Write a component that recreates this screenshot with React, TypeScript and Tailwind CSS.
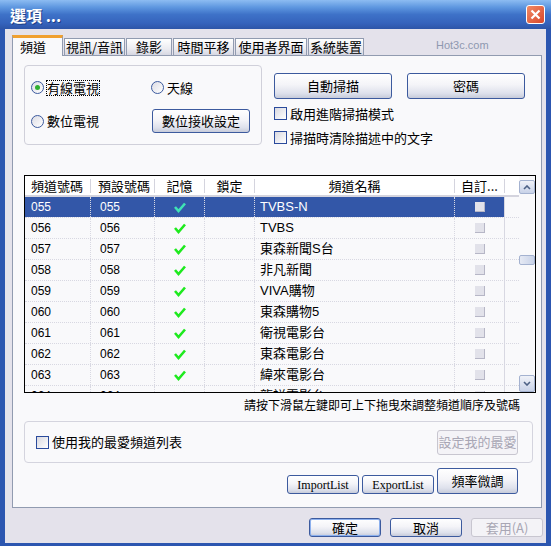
import React from "react";

const cjk = "font-['Noto_Sans_CJK_TC',sans-serif]";
const num = "font-['Liberation_Sans','Noto_Sans_CJK_TC',sans-serif]";

const rows = [
  ["055", "055", "TVBS-N"],
  ["056", "056", "TVBS"],
  ["057", "057", "東森新聞S台"],
  ["058", "058", "非凡新聞"],
  ["059", "059", "VIVA購物"],
  ["060", "060", "東森購物5"],
  ["061", "061", "衛視電影台"],
  ["062", "062", "東森電影台"],
  ["063", "063", "緯來電影台"],
  ["064", "064", "龍祥電影台"],
];

const tabs = ["頻道", "視訊/音訊", "錄影", "時間平移", "使用者界面", "系統裝置"];
const tabW = ["w-[51px]", "w-[61px]", "w-[46px]", "w-[61px]", "w-[72px]", "w-[56px]"];

function XpButton({ children, className = "", disabled = false }: { children: React.ReactNode; className?: string; disabled?: boolean }) {
  return (
    <div
      className={
        "flex items-center justify-center rounded-[3px] border text-[12px] leading-[14px] " +
        (disabled
          ? "border-[#C8C6D0] bg-[#F4F3F7] text-[#A8A6B4] "
          : "border-[#3C5A9E] bg-[linear-gradient(#FFFFFF_0%,#F4F4F8_45%,#DEE1EC_80%,#C6CBDA_100%)] text-black ") +
        className
      }
    >
      {children}
    </div>
  );
}

function Radio({ checked = false }: { checked?: boolean }) {
  return (
    <div className="flex h-[13px] w-[13px] shrink-0 items-center justify-center rounded-full border border-[#3C5A9E] bg-[linear-gradient(135deg,#DCDCE4,#FFFFFF)]">
      {checked && <div className="h-[5px] w-[5px] rounded-full bg-[#2FAF2F]" />}
    </div>
  );
}

function Check() {
  return <div className="h-[13px] w-[13px] shrink-0 border border-[#2A4A9C] bg-[linear-gradient(135deg,#D8D8E0,#FFFFFF)]" />;
}

function Tick({ color }: { color: string }) {
  return (
    <svg width="12" height="11" viewBox="0 0 12 11">
      <path d="M1 5 L4.5 9 L11 1.5" stroke={color} strokeWidth="2.6" fill="none" />
    </svg>
  );
}

export default function App() {
  return (
    <div className={"flex h-[546px] w-[551px] flex-col bg-[#2C56B0] leading-[14px] " + cjk}>
      {/* title bar */}
      <div className="relative flex h-[29px] shrink-0 items-center bg-[linear-gradient(#8DBCF2_0%,#5E97E0_25%,#3E72C8_50%,#3563BC_80%,#2D55A8_100%)] pl-[10px]">
        <span className="text-[16px] font-bold leading-[20px] text-white [text-shadow:1px_1px_0_#1D3F86]">選項 ...</span>
        <div className="absolute right-[6px] top-[5px] flex h-[19px] w-[19px] items-center justify-center rounded-[3px] border border-white bg-[linear-gradient(135deg,#F08A66,#D9472A)]">
          <svg width="11" height="11" viewBox="0 0 11 11">
            <path d="M1.5 1.5 L9.5 9.5 M9.5 1.5 L1.5 9.5" stroke="white" strokeWidth="2.2" />
          </svg>
        </div>
      </div>

      {/* body */}
      <div className="mx-[5px] mb-[3px] flex flex-1 flex-col bg-[#E4E2EB]">
        {/* tabs */}
        <div className="relative ml-[7px] mt-[6px] flex h-[20px] shrink-0 items-end">
          {tabs.map((t, i) =>
            i === 0 ? (
              <div key={t} className={"relative z-10 -mb-[1px] flex h-[21px] items-center border-x border-t-[3px] border-[#919BB0] border-t-[#F0A030] bg-[#F9F9FB] pl-[7px] text-[13px] " + tabW[i]}>
                {t}
              </div>
            ) : (
              <div key={t} className={"ml-[1px] flex h-[17px] items-center justify-center border-x border-t border-[#919BB0] bg-[linear-gradient(#FFFFFF,#ECECF1_60%,#D6D7E2)] text-[13px] " + tabW[i]}>
                {t}
              </div>
            )
          )}
          <span className={"mb-[3px] ml-[72px] text-[11px] text-[#8E98B0] " + num}>Hot3c.com</span>
        </div>

        {/* panel */}
        <div className="ml-[7px] flex h-[453px] w-[530px] shrink-0 flex-col border border-[#919BB0] bg-[#F9F9FB]">
          <div className="flex h-[89px] shrink-0 items-start pl-[11px] pt-[9px]">
            <div className="h-[80px] w-[238px] rounded-[4px] border border-[#D0D0DA] pl-[6px] pt-[15px] text-[13px]">
              <div className="flex h-[13px] items-center">
                <div className="flex w-[120px] items-center gap-[3px]">
                  <Radio checked />
                  <span className="outline-dotted outline-1 outline-black">有線電視</span>
                </div>
                <div className="flex items-center gap-[3px]">
                  <Radio />
                  <span>天線</span>
                </div>
              </div>
              <div className="mt-[15px] flex h-[24px] items-center">
                <div className="flex w-[121px] items-center gap-[3px]">
                  <Radio />
                  <span>數位電視</span>
                </div>
                <XpButton className="h-[24px] w-[98px] text-[13px]">數位接收設定</XpButton>
              </div>
            </div>
            <div className="ml-[12px] pt-[8px] text-[13px]">
              <div className="flex gap-[15px]">
                <XpButton className="h-[26px] w-[118px] text-[13px]">自動掃描</XpButton>
                <XpButton className="h-[26px] w-[118px] text-[13px]">密碼</XpButton>
              </div>
              <div className="mt-[8px] flex h-[13px] items-center gap-[3px]">
                <Check />
                <span>啟用進階掃描模式</span>
              </div>
              <div className="mt-[11px] flex h-[13px] items-center gap-[3px]">
                <Check />
                <span>掃描時清除描述中的文字</span>
              </div>
            </div>
          </div>

          {/* table */}
          <div className="ml-[11px] mt-[30px] flex h-[218px] w-[512px] shrink-0 border border-black bg-[#F9F9FB]">
            <div className="flex w-[494px] flex-col overflow-hidden">
              <div className="flex h-[21px] shrink-0 items-center border-b-2 border-[#D4D4DE] bg-white text-[13px]">
                <div className="w-[66px] border-r border-[#D4D4DE] pl-[6px]">頻道號碼</div>
                <div className="w-[64px] border-r border-[#D4D4DE] pl-[7px]">預設號碼</div>
                <div className="w-[50px] border-r border-[#D4D4DE] text-center">記憶</div>
                <div className="w-[50px] border-r border-[#D4D4DE] text-center">鎖定</div>
                <div className="w-[200px] border-r border-[#D4D4DE] text-center">頻道名稱</div>
                <div className="w-[50px] border-r border-[#D4D4DE] text-center">自訂...</div>
              </div>
              {rows.map((r, i) => {
                const sel = i === 0;
                const bg = sel ? " bg-[#3357A8]" : "";
                return (
                  <div
                    key={r[0]}
                    className={"flex h-[21px] shrink-0 items-stretch border-b border-dotted border-[#D8D8E2] text-[12px] " + (sel ? "text-white" : "text-black")}
                  >
                    <div className={"flex w-[66px] items-center border-r border-dotted border-[#D8D8E2] pl-[6px] " + num + bg}>{r[0]}</div>
                    <div className={"flex w-[64px] items-center border-r border-dotted border-[#D8D8E2] pl-[9px] " + num + bg}>{r[1]}</div>
                    <div className={"flex w-[50px] items-center justify-center border-r border-dotted border-[#D8D8E2]" + bg}>
                      <Tick color={sel ? "#3FE4B4" : "#1EEA1E"} />
                    </div>
                    <div className={"w-[50px] border-r border-dotted border-[#D8D8E2]" + bg} />
                    <div className={"flex w-[200px] items-center border-r border-dotted border-[#D8D8E2] pl-[5px] text-[13px] " + num + bg}>{r[2]}</div>
                    <div className={"flex w-[50px] items-center justify-center border-r border-[#D8D8E2]" + bg}>
                      <div className="h-[10px] w-[10px] border-b border-r border-[#B6B6C6] bg-[#E2E2EA]" />
                    </div>
                  </div>
                );
              })}
            </div>
            {/* scrollbar */}
            <div className="flex w-[16px] flex-col pt-[4px]">
              <div className="flex h-[14px] items-center justify-center rounded-[2px] border border-[#A4B2D0] bg-[linear-gradient(#F0F2F8,#C8D2E8)]">
                <svg width="8" height="5" viewBox="0 0 8 5"><path d="M1 4 L4 1 L7 4" stroke="#4D6185" strokeWidth="1.6" fill="none" /></svg>
              </div>
              <div className="mt-[61px] h-[10px] rounded-[2px] border border-[#A4B2D0] bg-[linear-gradient(90deg,#E6EAF4,#C8D2E8)]" />
              <div className="flex-1" />
              <div className="flex h-[17px] items-center justify-center rounded-[2px] border border-[#A4B2D0] bg-[linear-gradient(#F0F2F8,#C8D2E8)]">
                <svg width="8" height="5" viewBox="0 0 8 5"><path d="M1 1 L4 4 L7 1" stroke="#4D6185" strokeWidth="1.6" fill="none" /></svg>
              </div>
            </div>
          </div>

          <div className="mr-[21px] mt-[4px] h-[16px] shrink-0 text-right text-[12px] leading-[16px]">請按下滑鼠左鍵即可上下拖曳來調整頻道順序及號碼</div>

          {/* favourites */}
          <div className="ml-[11px] mt-[8px] flex h-[42px] w-[509px] shrink-0 items-center justify-between rounded-[4px] border border-[#D4D4DE] pl-[11px] pr-[14px] text-[13px]">
            <div className="flex items-center gap-[3px]">
              <Check />
              <span>使用我的最愛頻道列表</span>
            </div>
            <XpButton disabled className="h-[25px] w-[81px] text-[13px]">設定我的最愛</XpButton>
          </div>

          <div className="mr-[23px] mt-[5px] flex items-end justify-end gap-[3px]">
            <XpButton className="h-[19px] w-[72px] font-['Liberation_Serif',serif] text-[12px]">ImportList</XpButton>
            <XpButton className="h-[19px] w-[72px] font-['Liberation_Serif',serif] text-[12px]">ExportList</XpButton>
            <XpButton className="h-[26px] w-[81px] text-[13px]">頻率微調</XpButton>
          </div>
        </div>

        {/* bottom buttons */}
        <div className="mt-[10px] flex justify-end gap-[9px] pr-[3px]">
          <XpButton className="h-[19px] w-[72px] border-[#2C4C9C] text-[13px] shadow-[inset_0_0_0_1px_#8CB0EE]">確定</XpButton>
          <XpButton className="h-[19px] w-[72px] text-[13px]">取消</XpButton>
          <XpButton disabled className="h-[19px] w-[72px] text-[13px]">套用(A)</XpButton>
        </div>
      </div>
    </div>
  );
}
